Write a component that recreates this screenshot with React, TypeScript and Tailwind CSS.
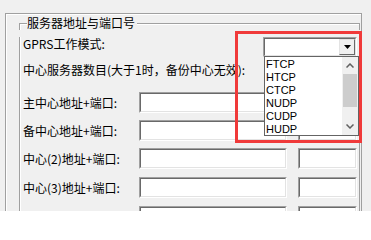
const font = "font-['Noto_Sans_CJK_SC','Liberation_Sans',sans-serif]"

function Sunken({ className = "" }: { className?: string }) {
  return (
    <div className={`border border-t-[#a0a0a0] border-l-[#a0a0a0] border-b-white border-r-white ${className}`}>
      <div className="h-full border border-t-[#696969] border-l-[#696969] border-b-[#e3e3e3] border-r-[#e3e3e3] bg-white" />
    </div>
  )
}

function AddressRow({ label, className = "" }: { label: string; className?: string }) {
  return (
    <div className={`flex h-[21px] items-center ${className}`}>
      <span className="w-[116px] shrink-0 text-[12px] leading-[14px]">{label}</span>
      <Sunken className="h-[21px] w-[148px]" />
      <Sunken className="ml-[11px] h-[21px] w-[59px]" />
    </div>
  )
}

const protocols = ["FTCP", "HTCP", "CTCP", "NUDP", "CUDP", "HUDP"]

export default function App() {
  return (
    <div className={`relative h-[211px] w-[371px] overflow-hidden bg-[#f0f0f0] pl-[5px] pt-[13px] text-black ${font}`}>
      {/* outer panel */}
      <div className="h-[220px] w-[357px] border-l border-r border-t border-[#a0a0a0] pl-[13px] pr-[1px] pt-[2px] shadow-[inset_1px_1px_0_#ffffff]">
        {/* group header */}
        <div className="flex h-[14px] items-start">
          <div className="mt-[7px] h-[7px] w-[8px] border-l border-t border-[#a0a0a0] shadow-[inset_1px_1px_0_#ffffff]" />
          <span className="pr-[2px] text-[12px] leading-[14px]">服务器地址与端口号</span>
          <div className="mt-[7px] h-[7px] flex-1 border-r border-t border-[#a0a0a0] shadow-[inset_0_1px_0_#ffffff]" />
        </div>
        {/* group body */}
        <div className="h-[200px] border-l border-r border-[#a0a0a0] pl-[3px] pr-[2px] shadow-[inset_1px_0_0_#ffffff]">
          <div className="mt-[7px] flex items-start justify-between">
            <span className="text-[12px] leading-[14px]">GPRS工作模式:</span>
            <div className="flex h-[20px] w-[94px] border border-t-[#a0a0a0] border-l-[#a0a0a0] border-b-white border-r-white">
              <div className="flex flex-1 justify-end border border-t-[#696969] border-l-[#696969] border-b-[#e3e3e3] border-r-[#e3e3e3] bg-white">
                <div className="flex w-[16px] items-center justify-center border border-t-[#e3e3e3] border-l-[#e3e3e3] border-b-[#696969] border-r-[#696969] bg-[#f0f0f0]">
                  <svg width="7" height="4" viewBox="0 0 7 4">
                    <polygon points="0,0 7,0 3.5,4" fill="#000" />
                  </svg>
                </div>
              </div>
            </div>
          </div>
          <div className="mt-[6px] text-[12px] leading-[14px]">中心服务器数目(大于1时，备份中心无效):</div>
          <AddressRow label="主中心地址+端口:" className="mt-[15px]" />
          <AddressRow label="备中心地址+端口:" className="mt-[7px]" />
          <AddressRow label="中心(2)地址+端口:" className="mt-[7px]" />
          <AddressRow label="中心(3)地址+端口:" className="mt-[8px]" />
          <AddressRow label="中心(4)地址+端口:" className="mt-[8px]" />
        </div>
      </div>

      {/* open dropdown list */}
      <div className="absolute left-[264px] top-[56px] flex h-[80px] w-[95px] border border-[#646464] bg-white">
        <ul className="flex-1 pt-[1px] font-['Liberation_Sans',sans-serif] text-[11px] leading-[13px]">
          {protocols.map((p) => (
            <li key={p} className="pl-[1px]">
              {p}
            </li>
          ))}
        </ul>
        <div className="flex w-[16px] flex-col bg-[#f0f0f0]">
          <div className="flex h-[17px] items-center justify-center">
            <svg width="8" height="5" viewBox="0 0 8 5">
              <polyline points="0.5,4.5 4,1 7.5,4.5" fill="none" stroke="#606060" strokeWidth="1.5" />
            </svg>
          </div>
          <div className="mx-[1px] h-[33px] bg-[#cdcdcd]" />
          <div className="flex-1" />
          <div className="flex h-[17px] items-center justify-center">
            <svg width="8" height="5" viewBox="0 0 8 5">
              <polyline points="0.5,0.5 4,4 7.5,0.5" fill="none" stroke="#606060" strokeWidth="1.5" />
            </svg>
          </div>
        </div>
      </div>

      {/* red highlight */}
      <div className="pointer-events-none absolute left-[235px] top-[31px] h-[112px] w-[127px] border-[3px] border-[#f03a3a]" />
    </div>
  )
}
